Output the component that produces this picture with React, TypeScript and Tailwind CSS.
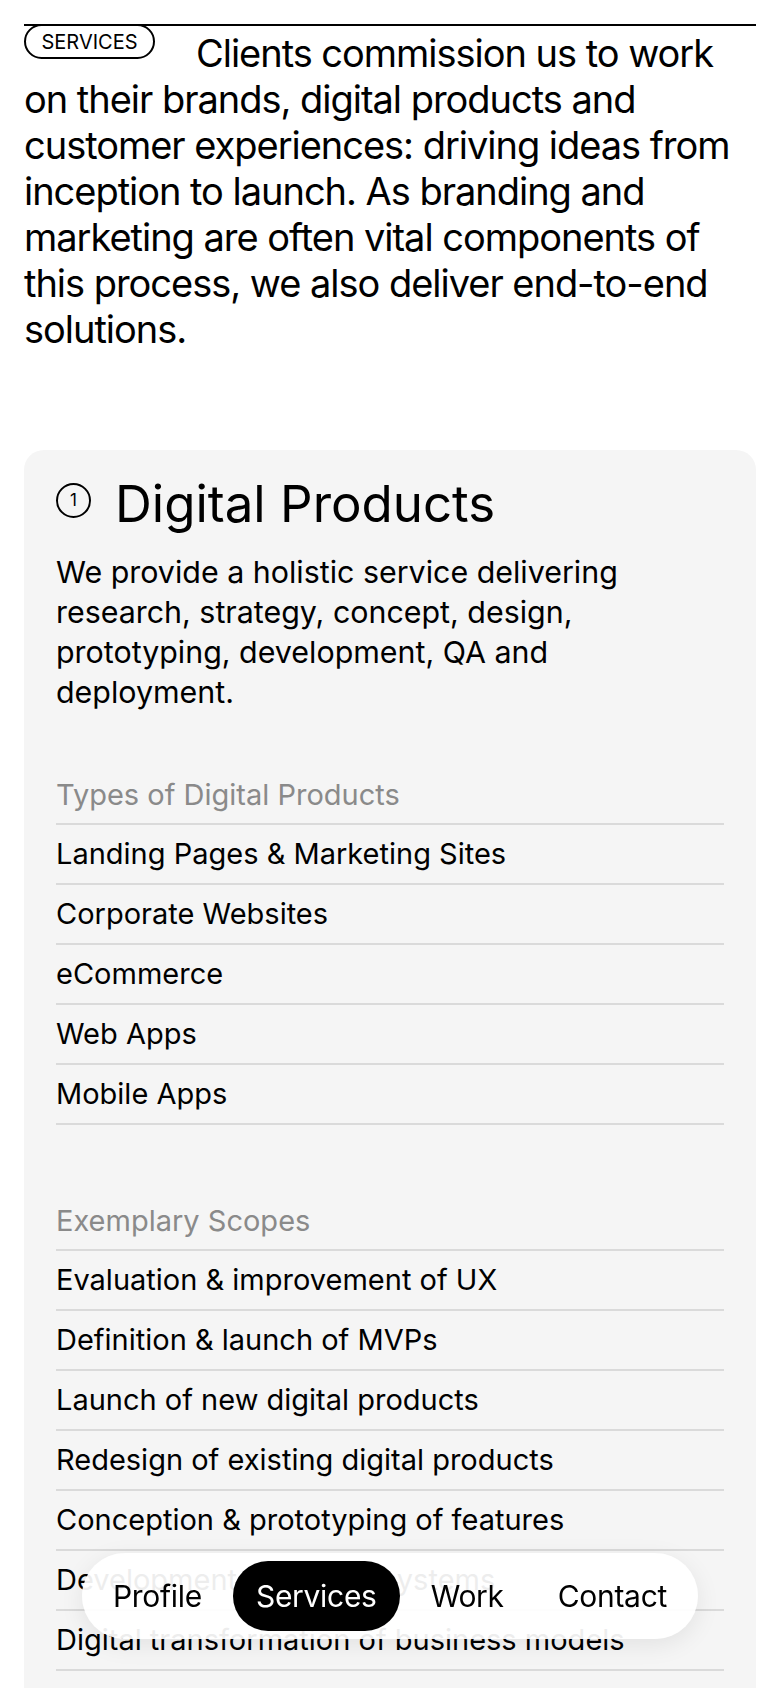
import React from "react";

const types = [
  "Landing Pages & Marketing Sites",
  "Corporate Websites",
  "eCommerce",
  "Web Apps",
  "Mobile Apps",
];

const scopes = [
  "Evaluation & improvement of UX",
  "Definition & launch of MVPs",
  "Launch of new digital products",
  "Redesign of existing digital products",
  "Conception & prototyping of features",
  "Development of design systems",
  "Digital transformation of business models",
  "Continuous optimisation & maintenance",
];

function Group({ title, items }: { title: string; items: string[] }) {
  return (
    <div>
      <div className="text-[29px] leading-[36px] text-[#8a8a8a] pb-[10px]">{title}</div>
      <ul className="border-t-2 border-[#dadada]">
        {items.map((t) => (
          <li key={t} className="border-b-2 border-[#dadada] py-[11px] text-[29px] leading-[36px] text-black">
            {t}
          </li>
        ))}
      </ul>
    </div>
  );
}

export default function App() {
  return (
    <div className="min-h-screen bg-white font-['Inter','Noto_Sans',sans-serif] text-black">
      <section className="px-6 pt-6">
        <div className="relative border-t-2 border-black">
          <span className="absolute left-0 top-[-2px] flex h-[35px] w-[131px] items-center justify-center rounded-full border-2 border-black bg-white pt-[1px] text-[20px] uppercase leading-none">
            Services
          </span>
          <p className="pt-1 text-[38px] leading-[46px] tracking-[-0.027em] indent-[172px]">
            Clients commission us to work on their brands, digital products and customer experiences: driving ideas from inception to launch. As branding and marketing are often vital components of this process, we also deliver end-to-end solutions.
          </p>
        </div>

        <div className="mt-[98px] rounded-[20px] bg-[#f5f5f5] px-8 pt-[26px] pb-24">
          <div className="flex items-start gap-6">
            <span className="mt-[7px] flex h-[35px] w-[35px] shrink-0 items-center justify-center rounded-full border-2 border-black text-[17px] leading-none">
              1
            </span>
            <h2 className="text-[51px] leading-[56px]">Digital Products</h2>
          </div>
          <p className="mt-5 text-[30.4px] leading-[40px]">
            We provide a holistic service delivering research, strategy, concept, design, prototyping, development, QA and deployment.
          </p>
          <div className="mt-[65px]">
            <Group title="Types of Digital Products" items={types} />
          </div>
          <div className="mt-[78px]">
            <Group title="Exemplary Scopes" items={scopes} />
          </div>
        </div>
      </section>

      <nav className="fixed bottom-[49px] left-1/2 flex -translate-x-1/2 items-center gap-2 rounded-full bg-white/[0.93] p-2 shadow-[0_6px_24px_rgba(0,0,0,0.08)]">
        {["Profile", "Services", "Work", "Contact"].map((t) => (
          <span
            key={t}
            className={
              t === "Services"
                ? "flex h-[70px] items-center rounded-full bg-black px-[23px] text-[30px] tracking-[-0.01em] text-white"
                : "flex h-[70px] items-center rounded-full px-[23px] text-[30px] tracking-[-0.01em] text-black"
            }
          >
            {t}
          </span>
        ))}
      </nav>
    </div>
  );
}
